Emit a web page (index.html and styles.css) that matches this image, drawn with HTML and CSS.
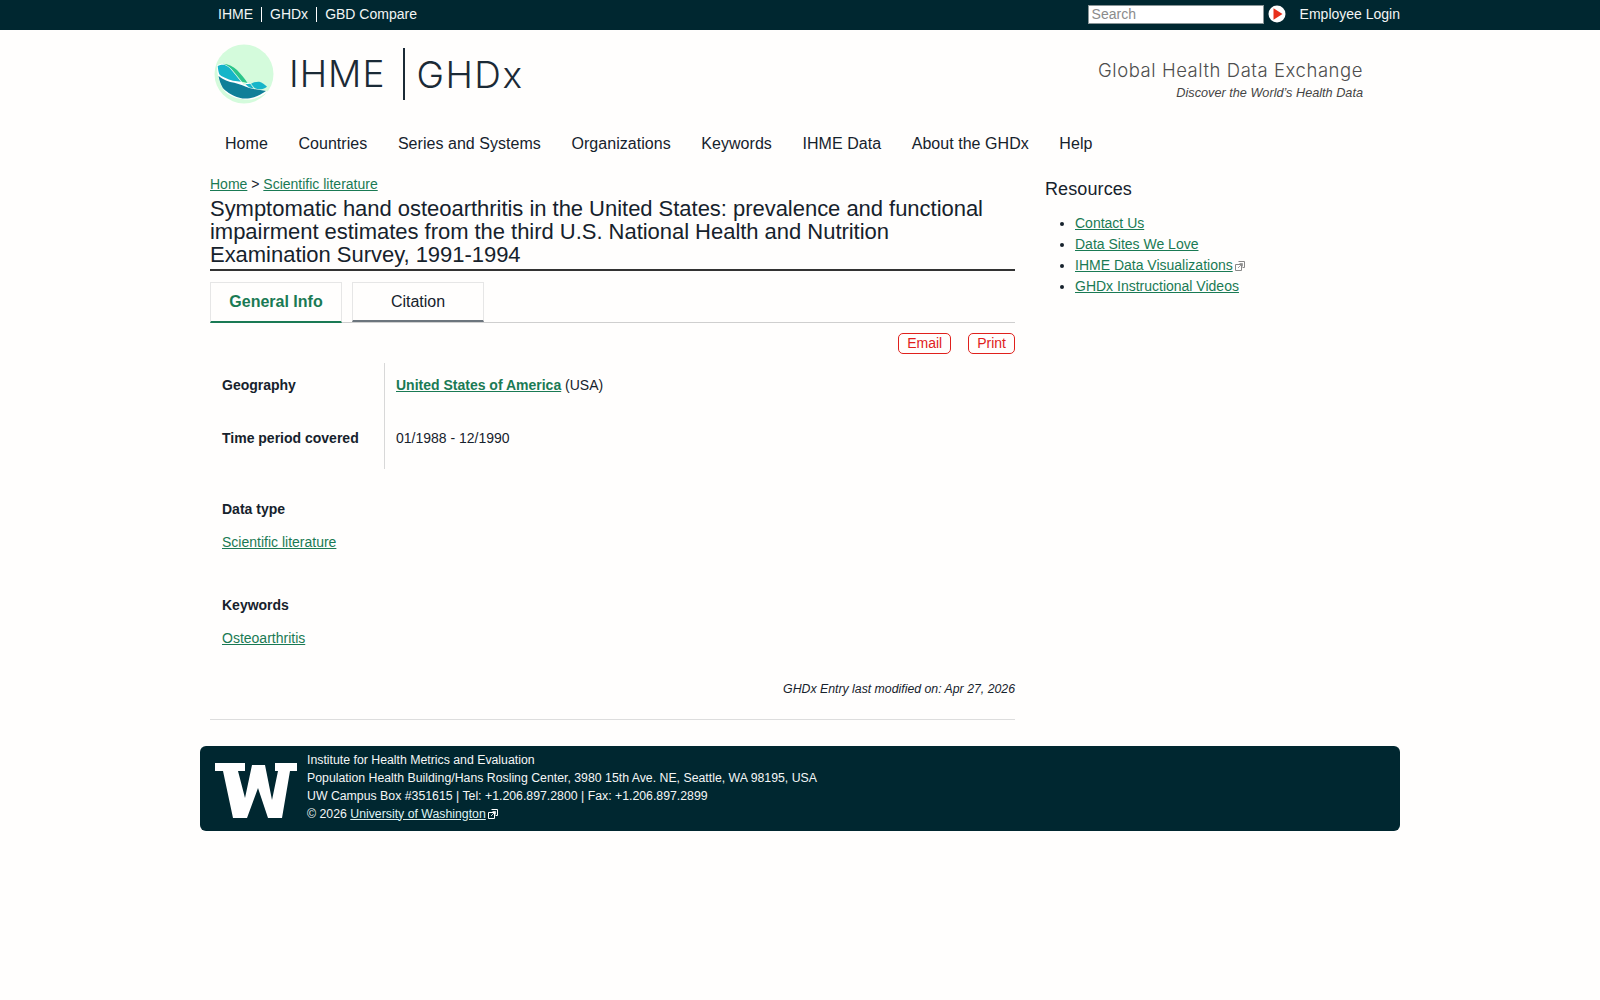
FILE: index.html
```html
<!DOCTYPE html>
<html lang="en">
<head>
<meta charset="utf-8">
<title>Symptomatic hand osteoarthritis in the United States | GHDx</title>
<link rel="stylesheet" href="styles.css">
</head>
<body>
<svg class="defs" width="0" height="0" aria-hidden="true">
  <symbol id="ext" viewBox="0 0 10 10">
    <path d="M3.5 .5h6v6h-2M.5 3.5h6v6h-6z" fill="none" stroke="currentColor" stroke-width="1"/>
    <path d="M3 7l4-4M4.500 2.500h3v3" fill="none" stroke="currentColor" stroke-width=".8"/>
  </symbol>
</svg>
<div class="topbar">
  <div class="wrap topbar-inner">
    <ul class="toplinks">
      <li><a href="#">IHME</a></li>
      <li><a href="#">GHDx</a></li>
      <li><a href="#">GBD Compare</a></li>
    </ul>
    <div class="topright">
      <input class="search" type="text" placeholder="Search">
      <svg class="go" viewBox="0 0 18 18" width="18" height="18"><circle cx="9" cy="9" r="8.500" fill="#fff"/><path d="M5.500 3.200L14.500 9l-9 5.800z" fill="#e8301c"/></svg>
      <a class="login" href="#">Employee Login</a>
    </div>
  </div>
</div>

<header class="wrap masthead">
  <div class="brand">
    <svg class="logo" viewBox="0 0 60 60" width="60" height="60">
      <circle cx="30" cy="30" r="29.500" fill="#d4fbdc"/>
      <path d="M3 21.500C5 20 8 19.500 10.500 20C14 21 16 23 18 26C21 30 24 34 28 38.500L30 41L33 38.800L37 39.500L39 44.500L54 47.500C50 51 42 55.500 34 55.500C26 55.500 18 53.500 12 48.500C6 42 3 32 3 21.500z" fill="#fff"/>
      <path d="M8.700 19.700C14 20 19 22 23 26C27 30 31 35 33.500 39L28 37.700C24 33 21 29 17.500 25C15 22.500 12 20.500 8.700 19.700z" fill="#2cc58a"/>
      <path d="M3.700 22C6 20.800 8 20.500 10.300 20.800C13 21.800 15.500 23.500 17 25.500C20 29 23.500 33.500 27 37.700C22 37.500 16 36.500 11 33.800C8 32.500 6 31.500 5.300 30.300C4.500 28 4 25 3.700 22z" fill="#16b5c9"/>
      <path d="M4.500 32C9 36 15 37.800 20.300 38.800C26 40.200 31 42.500 35.300 44C41 45.500 47 46.300 52 47C47 50.500 41 54 33.700 54.500C28 54.800 24 53.800 20.300 52C15 49.500 10.500 46 8.700 43.700C6.500 40 5.200 36 4.500 32z" fill="#0f7f98"/>
      <path d="M37 39.700C40 38 43 37.500 45.300 37.700C48 38.500 51 40.500 53 42.700C51 44 49 45 47 45.300C44.500 45.300 42 44.700 40.300 43.700z" fill="#16b5c9"/>
      <path d="M31.300 40.300L36.300 39.700L39.700 44.500L35.300 43.500z" fill="#16b5c9"/>
    </svg>
    <span class="brand-a">IHME</span>
    <span class="brand-b">GHDx</span>
  </div>
  <div class="tagline">
    <div class="tag-title">Global Health Data Exchange</div>
    <div class="tag-sub">Discover the World’s Health Data</div>
  </div>
</header>

<nav class="wrap mainnav">
  <a href="#">Home</a>
  <a href="#">Countries</a>
  <a href="#">Series and Systems</a>
  <a href="#">Organizations</a>
  <a href="#">Keywords</a>
  <a href="#">IHME Data</a>
  <a href="#">About the GHDx</a>
  <a href="#">Help</a>
</nav>

<div class="wrap columns">
  <main class="content">
    <div class="crumbs"><a href="#">Home</a> &gt; <a href="#">Scientific literature</a></div>
    <h1>Symptomatic hand osteoarthritis in the United States: prevalence and functional impairment estimates from the third U.S. National Health and Nutrition Examination Survey, 1991-1994</h1>
    <div class="tabs">
      <a class="tab active" href="#">General Info</a>
      <a class="tab" href="#">Citation</a>
    </div>
    <div class="actions">
      <a class="pill" href="#">Email</a>
      <a class="pill" href="#">Print</a>
    </div>
    <div class="facts">
      <div class="fact-labels">
        <div class="fact-label">Geography</div>
        <div class="fact-label">Time period covered</div>
      </div>
      <div class="fact-values">
        <div class="fact-value"><a class="strong" href="#">United States of America</a> (USA)</div>
        <div class="fact-value">01/1988 - 12/1990</div>
      </div>
    </div>
    <section class="block block-first">
      <h3>Data type</h3>
      <a href="#">Scientific literature</a>
    </section>
    <section class="block">
      <h3>Keywords</h3>
      <a href="#">Osteoarthritis</a>
    </section>
    <div class="modified">GHDx Entry last modified on: Apr 27, 2026</div>
  </main>
  <aside class="sidebar">
    <h2>Resources</h2>
    <ul>
      <li><a href="#">Contact Us</a></li>
      <li><a href="#">Data Sites We Love</a></li>
      <li><a href="#">IHME Data Visualizations</a><svg class="ext grey" width="10" height="10"><use href="#ext"/></svg></li>
      <li><a href="#">GHDx Instructional Videos</a></li>
    </ul>
  </aside>
</div>

<footer class="wrap footer">
  <svg class="uw" viewBox="0 0 82 55" width="82" height="55">
    <path d="M0 0H30V8H23L30 35L37 2H50L57 37L63 8H60V0H82V8H75L67 55H53L43 25L32 55H18L8 8H0z" fill="#fff"/>
  </svg>
  <div class="foot-text">
    <div>Institute for Health Metrics and Evaluation</div>
    <div>Population Health Building/Hans Rosling Center, 3980 15th Ave. NE, Seattle, WA 98195, USA</div>
    <div>UW Campus Box #351615 | Tel: +1.206.897.2800 | Fax: +1.206.897.2899</div>
    <div>© 2026 <a href="#">University of Washington</a><svg class="ext" width="10" height="10"><use href="#ext"/></svg></div>
  </div>
</footer>
</body>
</html>
```
FILE: styles.css
```css
* { box-sizing: border-box; }
html, body { margin: 0; padding: 0; }
body {
  background: #fffefd;
  color: #16222c;
  font-family: "Liberation Sans", Arial, sans-serif;
  font-size: 14px;
}
a { color: #1a7a54; }
.defs { position: absolute; }
.wrap { width: 1200px; margin: 0 auto; }

.topbar { background: #002730; height: 30px; }
.topbar-inner { display: flex; justify-content: space-between; align-items: center; height: 28px; }
.toplinks { display: flex; list-style: none; margin: 0; padding: 0 0 0 10px; }
.toplinks li { padding: 0 8px; border-left: 1px solid #fff; line-height: 15px; }
.toplinks li:first-child { border-left: 0; padding-left: 8px; }
.toplinks a, .login { color: #f2f5f5; text-decoration: none; font-size: 14px; }
.topright { display: flex; align-items: center; }
.search {
  width: 176px; height: 19px; padding: 0 3px; margin: 0;
  border: 1px solid #8a9597; background: #fff; font: 14px "Liberation Sans", Arial, sans-serif;
}
.search::placeholder { color: #8b8b8b; opacity: 1; }
.go { margin-left: 4px; }
.login { margin-left: 14px; }

.masthead { display: flex; justify-content: space-between; height: 100px; }
.brand { display: flex; align-items: center; align-self: flex-start; padding: 14px 0 0 14px; }
.logo { display: block; }
.brand-a {
  font-family: Inter, sans-serif; font-weight: 300; font-size: 37px; letter-spacing: 1px; color: #1b2a36;
  margin-left: 15px; padding-right: 18px; border-right: 2px solid #1b2a36; line-height: 52px;
}
.brand-b {
  font-family: Inter, sans-serif; font-weight: 300; font-size: 37px; letter-spacing: 1.500px; color: #1b2a36; margin-left: 11px;
}
.tagline { text-align: right; padding: 29px 37px 0 0; }
.tag-title { font-family: Inter, sans-serif; font-weight: 300; font-size: 18.500px; letter-spacing: .55px; color: #4e4e4e; line-height: 22px; }
.tag-sub { font-style: italic; font-size: 12.700px; color: #444; line-height: 20px; margin-top: 2px; }

.mainnav { display: flex; gap: 30.600px; padding-left: 25px; height: 43px; align-items: center; margin-top: -8px; }
.mainnav a { color: #16222c; text-decoration: none; font-size: 16px; letter-spacing: .04px; }

.columns { display: flex; padding-left: 10px; align-items: flex-start; margin-top: 9px; }
.content { width: 805px; }
.crumbs { line-height: 20px; }
h1 {
  margin: 3px 0 0; padding: 0 12px 3px 0; border-bottom: 2px solid #333;
  font-size: 22px; letter-spacing: -.03px; font-weight: 400; line-height: 23px; color: #16222c;
}
.tabs { display: flex; gap: 10px; margin-top: 11px; border-bottom: 1px solid #cfcfcf; height: 41px; }
.tab {
  display: block; width: 132px; height: 40px; line-height: 38px; text-align: center;
  font-size: 16px; color: #16222c; text-decoration: none;
  border: 1px solid #e6e6e6; border-bottom: 2px solid #6c757d;
}
.tab.active { height: 41px; color: #1a7a54; font-weight: 700; border-bottom-color: #1a7a54; }
.actions { display: flex; justify-content: flex-end; gap: 17px; margin-top: 10px; }
.pill {
  border: 1px solid #e0201c; border-radius: 5px; color: #e0201c; text-decoration: none;
  height: 21px; line-height: 19px; padding: 0 8px; font-size: 14px;
}
.facts { display: flex; margin-top: 9px; }
.fact-labels { width: 175px; padding-left: 12px; border-right: 1px solid #d8d8d8; }
.fact-label { height: 53px; padding-top: 13px; font-weight: 700; line-height: 18px; }
.fact-values { padding-left: 11px; }
.fact-value { height: 53px; padding-top: 13px; line-height: 18px; }
.strong { font-weight: 700; }
.block { padding-left: 12px; margin-top: 43px; line-height: 20px; }
.block-first { margin-top: 30px; }
.block h3 { margin: 0 0 13px; font-size: 14px; line-height: 20px; font-weight: 700; }
.modified { text-align: right; font-style: italic; font-size: 12.300px; line-height: 18px; margin-top: 32px; padding-bottom: 21px; border-bottom: 1px solid #ddd; }

.sidebar { margin-left: 30px; width: 355px; padding-top: 3px; }
.sidebar h2 { margin: 0; font-size: 18px; font-weight: 400; letter-spacing: .1px; line-height: 24px; }
.sidebar ul { margin: 12px 0 0; padding-left: 30px; }
.sidebar li { line-height: 21px; }
.ext { margin-left: 2px; vertical-align: -1px; color: #fff; }
.ext.grey { color: #888; }

.footer {
  display: flex; align-items: center; gap: 10px; height: 85px; margin-top: 26px;
  padding-left: 15px; background: #002730; border-radius: 6px; color: #f4f6f6;
  font-size: 12.300px; line-height: 18px;
}
.uw { margin-top: 4px; }
.foot-text { padding-bottom: 4px; }
.footer a { color: #dff3f3; }
```
